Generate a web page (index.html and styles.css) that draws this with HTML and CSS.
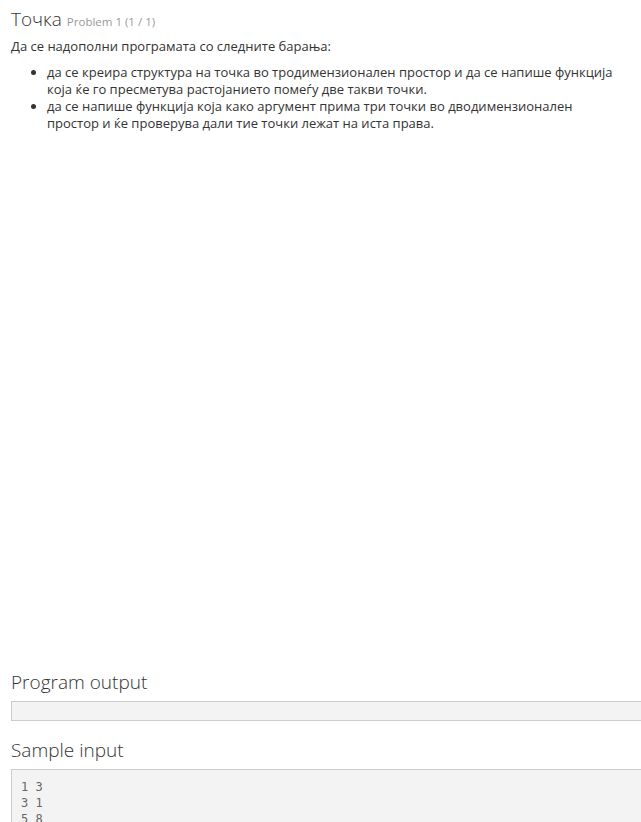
FILE: index.html
```html
<!DOCTYPE html>
<html>
<head>
<meta charset="utf-8">
<link rel="stylesheet" href="styles.css">
</head>
<body>
<div class="page">
  <h1 class="title">Точка <small class="sub">Problem 1 (1 / 1)</small></h1>
  <div class="desc">
    <p>Да се надополни програмата со следните барања:</p>
    <ul>
      <li>да се креира структура на точка во тродимензионален простор и да се напише функција која ќе го пресметува растојанието помеѓу две такви точки.</li>
      <li>да се напише функција која како аргумент прима три точки во дводимензионален простор и ќе проверува дали тие точки лежат на иста права.</li>
    </ul>
  </div>
  <div class="spacer"></div>
  <h2 class="section">Program output</h2>
  <div class="outbox"></div>
  <h2 class="section">Sample input</h2>
  <pre class="code">1 3
3 1
5 8
</pre>
</div>
</body>
</html>
```
FILE: styles.css
```css
html, body {
  margin: 0;
  padding: 0;
  overflow: hidden;
  background: #fff;
}
body {
  font-family: "Open Sans", "Noto Sans", sans-serif;
  font-size: 13px;
  line-height: 17px;
  color: #333;
}
.page {
  padding: 0 0 0 11px;
  width: 720px;
}
.title {
  margin: 0;
  padding-top: 7px;
  font-size: 19px;
  font-weight: 300;
  line-height: 24px;
  color: #333;
}
.sub {
  font-size: 11.5px;
  font-weight: 400;
  color: #999;
}
.desc {
  width: 610px;
}
.desc p {
  margin: 4px 0 9px;
}
.desc ul {
  margin: 0;
  padding-left: 36px;
}
.spacer {
  height: 538px;
}
.section {
  margin: 0 0 7px;
  font-size: 19px;
  font-weight: 300;
  line-height: 24px;
  color: #333;
}
.outbox {
  height: 18px;
  border: 1px solid #ccc;
  background: #f3f3f3;
  margin-bottom: 17px;
}
.code {
  margin: 0;
  border: 1px solid #ccc;
  background: #f3f3f3;
  padding: 9px 9px;
  font-family: "DejaVu Sans Mono", "Liberation Mono", monospace;
  font-size: 12px;
  line-height: 16px;
  color: #666;
}
```
